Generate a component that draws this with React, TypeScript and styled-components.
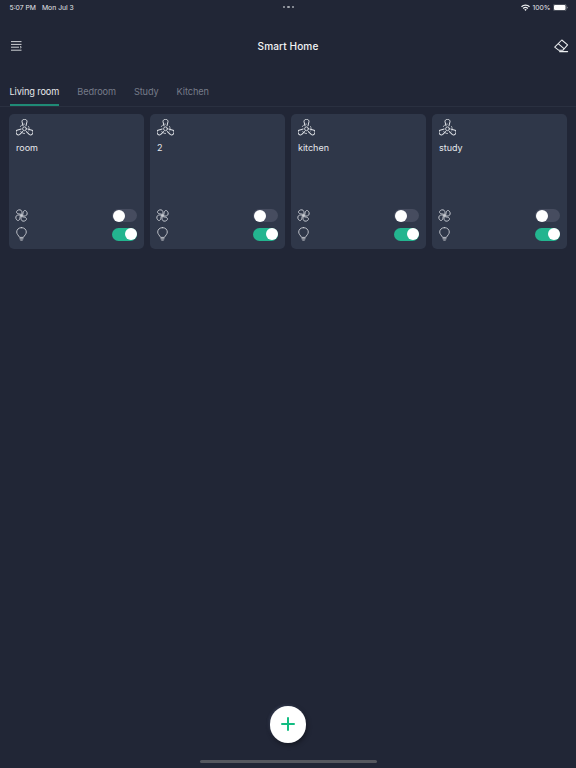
import React from "react";
import styled, { createGlobalStyle } from "styled-components";

const Global = createGlobalStyle`
  html, body { margin: 0; padding: 0; background: #212636; }
  body { font-family: Inter, "Noto Sans", sans-serif; overflow: hidden; }
  * { box-sizing: border-box; }
`;

const Page = styled.div`
  width: 576px;
  height: 768px;
  display: flex;
  flex-direction: column;
  background: #212636;
  color: #fff;
`;

const StatusBar = styled.div`
  height: 14px;
  padding: 0 8.5px 0 9.5px;
  display: grid;
  grid-template-columns: 1fr auto 1fr;
  align-items: center;
  font-size: 6.8px;
  font-weight: 400;
  color: #e4e6ea;
`;

const StatusLeft = styled.div`
  display: flex;
  gap: 6px;
`;

const Dots = styled.div`
  display: flex;
  gap: 2px;
`;

const Dot = styled.span`
  width: 2.5px;
  height: 2.5px;
  border-radius: 50%;
  background: #a3a7af;
`;

const StatusRight = styled.div`
  display: flex;
  justify-content: flex-end;
  align-items: center;
  gap: 2px;
`;

const Header = styled.header`
  height: 64px;
  padding: 0 7px;
  display: grid;
  grid-template-columns: 1fr auto 1fr;
  align-items: center;
`;

const Title = styled.h1`
  margin: 0;
  font-size: 10.1px;
  font-weight: 500;
  letter-spacing: 0.1px;
  color: #f2f3f5;
`;

const HeaderStart = styled.div`
  display: flex;
  padding-left: 4px;
`;

const HeaderEnd = styled.div`
  display: flex;
  justify-content: flex-end;
`;

const Tabs = styled.nav`
  height: 29px;
  padding-left: 9.5px;
  display: flex;
  gap: 18px;
  border-bottom: 1px solid #2a3040;
`;

const Tab = styled.div<{ $active?: boolean }>`
  height: 28px;
  padding-top: 6.5px;
  font-size: 9.2px;
  line-height: 14px;
  letter-spacing: -0.1px;
  color: ${(p) => (p.$active ? "#e6e8eb" : "#767b89")};
  border-bottom: 2px solid ${(p) => (p.$active ? "#1f8a76" : "transparent")};
`;

const Main = styled.main`
  flex: 1;
  padding: 7px 9px 0;
`;

const Grid = styled.div`
  display: grid;
  grid-template-columns: repeat(4, 135px);
  gap: 6px;
`;

const Card = styled.section`
  height: 135px;
  padding: 5px 7px 8.5px 7px;
  border-radius: 5px;
  background: #2f3749;
  display: flex;
  flex-direction: column;
`;

const CardName = styled.div`
  margin-top: 4px;
  font-size: 9px;
  line-height: 14px;
  font-weight: 400;
  color: #e6e8ec;
`;

const Controls = styled.div`
  margin-top: auto;
  display: flex;
  flex-direction: column;
  gap: 5.5px;
`;

const ControlRow = styled.div`
  height: 13px;
  display: flex;
  align-items: center;
  justify-content: space-between;
`;

const RowIcon = styled.svg`
  margin-left: -1px;
  flex: none;
`;

const Toggle = styled.div<{ $on?: boolean }>`
  width: 25px;
  height: 13px;
  padding: 0.5px;
  border-radius: 7px;
  display: flex;
  justify-content: ${(p) => (p.$on ? "flex-end" : "flex-start")};
  background: ${(p) => (p.$on ? "#23b58f" : "#464c5f")};
`;

const Knob = styled.span`
  width: 12px;
  height: 12px;
  border-radius: 50%;
  background: #fff;
`;

const Footer = styled.footer`
  height: 62px;
  display: flex;
  flex-direction: column;
  align-items: center;
`;

const Fab = styled.button`
  width: 36.5px;
  height: 36.5px;
  padding: 0;
  border: 0;
  border-radius: 50%;
  background: #fff;
  display: flex;
  align-items: center;
  justify-content: center;
  box-shadow: 1px 2px 5px rgba(0, 0, 0, 0.4), -1px -1px 3px rgba(120, 130, 170, 0.25);
`;

const HomeBar = styled.div`
  margin-top: 17.5px;
  width: 177px;
  height: 3px;
  border-radius: 2px;
  background: #56585f;
`;

const MenuIcon = () => (
  <svg width="11" height="10" viewBox="0 0 11 10" fill="none" stroke="#d8dade" strokeWidth="0.95">
    <path d="M0 .6H10.5M0 3.4H10.5M0 6.2H8M0 9.2H10.5" />
    <path d="M9 5.2L10.4 6.2 9 7.2" strokeWidth="0.8" />
  </svg>
);

const EraserIcon = () => (
  <svg width="15" height="14" viewBox="0 0 15 14" fill="none" stroke="#eceef0" strokeWidth="1.05" strokeLinejoin="round">
    <path d="M7.8 1L13.6 5.9 9 11.2H4.6L.7 8.2Z" />
    <path d="M4.2 4.7L10.3 9.9" />
    <path d="M5.6 12.6H13.6" strokeLinecap="round" />
  </svg>
);

const WifiIcon = () => (
  <svg width="9" height="7" viewBox="0 0 9 7" fill="#eceef0">
    <path d="M0 2.3A6.4 6.4 0 0 1 9 2.3L8 3.3A5 5 0 0 0 1 3.3Z" />
    <path d="M1.7 4A4 4 0 0 1 7.3 4L6.4 4.9A2.7 2.7 0 0 0 2.6 4.9Z" />
    <path d="M3.3 5.6A1.7 1.7 0 0 1 5.7 5.6L4.5 6.9Z" />
  </svg>
);

const BatteryIcon = () => (
  <svg width="15" height="7" viewBox="0 0 15 7">
    <rect x="0.25" y="0.25" width="13" height="6.5" rx="1.6" fill="none" stroke="#8d9097" strokeWidth="0.5" />
    <rect x="1" y="1" width="11.5" height="5" rx="1" fill="#fff" />
    <path d="M13.9 2.4c.6.2.9.6.9 1.1s-.3.9-.9 1.1Z" fill="#8d9097" />
  </svg>
);

const BigFan = () => (
  <svg width="17" height="18" viewBox="0 0 17 18" fill="none" stroke="#dfe2e7" strokeWidth="1" strokeLinejoin="round" strokeLinecap="round">
    {[0, 120, 240].map((a) => (
      <g key={a} transform={`translate(8.5 9.8) rotate(${a})`}>
        <path d="M-1.5 -3L-2.5 -7.2C-2.7 -10.2 2.7 -10.2 2.5 -7.2L1.5 -3" />
        <path d="M-4 2.4A4.7 4.7 0 0 1 -4.1 -2.3" strokeWidth="0.7" transform="rotate(60)" strokeDasharray="1.2 1.1" />
      </g>
    ))}
    <circle cx="8.5" cy="9.8" r="1.9" strokeWidth="0.9" />
  </svg>
);

const SmallFan = () => (
  <RowIcon width="13" height="13" viewBox="0 0 13 13" fill="none" stroke="#c9ccd3" strokeWidth="0.85" strokeLinejoin="round">
    {[-20, 70, 160, 250].map((a) => (
      <path
        key={a}
        transform={`translate(6.5 6.5) rotate(${a})`}
        d="M0 -1.2C-1.4 -2.4 -3.5 -2.8 -3.6 -4.4 -3.7 -6 -1.2 -6.8 .6 -5.8 2.2 -4.9 1.8 -2.6 .8 -1Z"
      />
    ))}
    <circle cx="6.5" cy="6.5" r="1.3" fill="#c9ccd3" stroke="none" />
  </RowIcon>
);

const Bulb = () => (
  <RowIcon width="13" height="14" viewBox="0 0 13 14" fill="none" stroke="#c9ccd3" strokeWidth="0.9" strokeLinejoin="round" strokeLinecap="round">
    <path d="M6.5 .6C3.6 .6 1.7 2.6 1.7 5 1.7 7.2 3.6 8.4 4.6 10.4H8.4C9.4 8.4 11.3 7.2 11.3 5 11.3 2.6 9.4 .6 6.5 .6Z" />
    <path d="M4.9 11.8H8.1M5.7 13.1H7.3" />
  </RowIcon>
);

const PlusIcon = () => (
  <svg width="14" height="14" viewBox="0 0 14 14" fill="none" stroke="#12bd82" strokeWidth="2" strokeLinecap="round">
    <path d="M7 1V13M1 7H13" />
  </svg>
);

const tabs = ["Living room", "Bedroom", "Study", "Kitchen"];
const rooms = ["room", "2", "kitchen", "study"];

export default function App() {
  return (
    <Page>
      <Global />
      <StatusBar>
        <StatusLeft>
          <span>5:07 PM</span>
          <span>Mon Jul 3</span>
        </StatusLeft>
        <Dots>
          <Dot />
          <Dot />
          <Dot />
        </Dots>
        <StatusRight>
          <WifiIcon />
          <span>100%</span>
          <BatteryIcon />
        </StatusRight>
      </StatusBar>
      <Header>
        <HeaderStart>
          <MenuIcon />
        </HeaderStart>
        <Title>Smart Home</Title>
        <HeaderEnd>
          <EraserIcon />
        </HeaderEnd>
      </Header>
      <Tabs>
        {tabs.map((t, i) => (
          <Tab key={t} $active={i === 0}>
            {t}
          </Tab>
        ))}
      </Tabs>
      <Main>
        <Grid>
          {rooms.map((r) => (
            <Card key={r}>
              <BigFan />
              <CardName>{r}</CardName>
              <Controls>
                <ControlRow>
                  <SmallFan />
                  <Toggle>
                    <Knob />
                  </Toggle>
                </ControlRow>
                <ControlRow>
                  <Bulb />
                  <Toggle $on>
                    <Knob />
                  </Toggle>
                </ControlRow>
              </Controls>
            </Card>
          ))}
        </Grid>
      </Main>
      <Footer>
        <Fab aria-label="Add">
          <PlusIcon />
        </Fab>
        <HomeBar />
      </Footer>
    </Page>
  );
}
